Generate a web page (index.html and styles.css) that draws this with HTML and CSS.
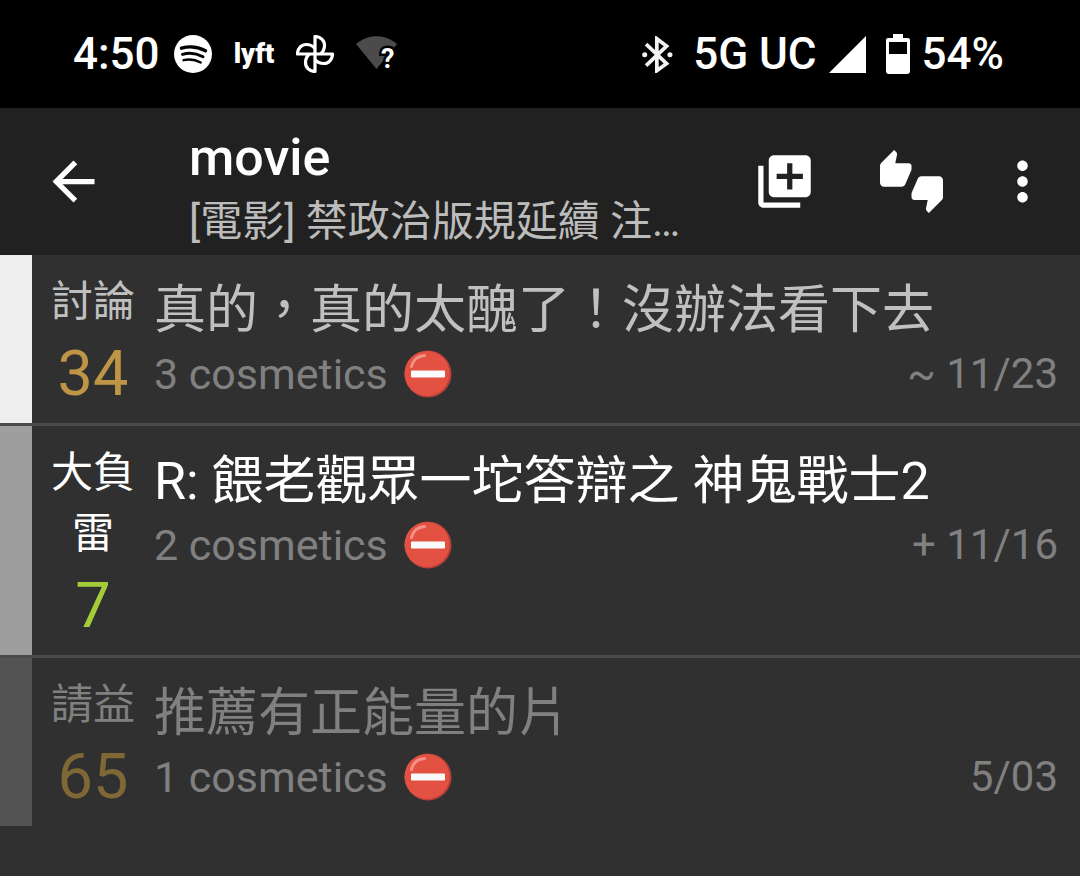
FILE: index.html
```html
<!DOCTYPE html>
<html lang="zh-Hant">
<head>
<meta charset="utf-8">
<meta name="viewport" content="width=device-width, initial-scale=1">
<title>movie</title>
<link rel="stylesheet" href="styles.css">
</head>
<body>
<svg class="defs" aria-hidden="true">
  <symbol id="no-entry" viewBox="0 0 48 48">
    <circle cx="24" cy="24" r="23.5" fill="#b93f3a"/>
    <circle cx="23" cy="23.5" r="22.5" fill="#e25141"/>
    <path d="M7.5 16.5C9 10 14 6 20.500 5.500" fill="none" stroke="#f29185" stroke-width="3" stroke-linecap="round"/>
    <rect x="7" y="20.500" width="34" height="7" rx="1" fill="#fafafa"/>
  </symbol>
</svg>

<div class="status-bar">
  <div class="status-group">
    <span class="clock">4:50</span>
    <svg class="spotify" viewBox="0 0 38 38" aria-hidden="true">
      <circle cx="19" cy="19" r="19" fill="#fff"/>
      <g fill="none" stroke="#000" stroke-linecap="round">
        <path d="M7.500 13.200C15 11 24 11.800 31.500 15.700" stroke-width="3.400"/>
        <path d="M8.500 19.400C15 17.500 22.500 18.300 29 21.800" stroke-width="2.900"/>
        <path d="M9.500 25.200C15.500 23.700 21 24.300 26.700 27.500" stroke-width="2.400"/>
      </g>
    </svg>
    <span class="lyft">lyft</span>
    <svg class="pinwheel" viewBox="-19 -19 38 38" aria-hidden="true">
      <g fill="none" stroke="#fff" stroke-width="3.200" stroke-linejoin="round">
        <path d="M0 0V-17.500C5.500-17.500 9.500-13.500 9.500-8.700C9.500-5 8-2 5.500 0"/>
        <path d="M0 0H17.500C17.500 5.500 13.500 9.500 8.700 9.500C5 9.500 2 8 0 5.500"/>
        <path d="M0 0V17.500C-5.500 17.500-9.500 13.500-9.500 8.700C-9.500 5-8 2-5.500 0"/>
        <path d="M0 0H-17.500C-17.500-5.500-13.500-9.500-8.700-9.500C-5-9.500-2-8 0-5.500"/>
      </g>
    </svg>
    <svg class="wifi" viewBox="0 0 41 36" aria-hidden="true">
      <path d="M0 8C12-2.500 29-2.500 41 8L20.500 33Z" fill="#4b4b4b"/>
      <text class="wifi-mark" x="25" y="32">?</text>
    </svg>
  </div>
  <div class="status-group">
    <svg class="bluetooth" viewBox="61 48 92 110" aria-hidden="true">
      <path d="M73 72L134 130L105 151V56L134 78L73 136" fill="none" stroke="#f2f2f2" stroke-width="11" stroke-linejoin="miter"/>
      <circle cx="69" cy="103.500" r="7.500" fill="#f2f2f2"/>
      <circle cx="144" cy="103.500" r="7.500" fill="#f2f2f2"/>
    </svg>
    <span class="network">5G UC</span>
    <svg class="signal" viewBox="0 0 37 37" aria-hidden="true"><path d="M37 0V37H0Z" fill="#fff"/></svg>
    <svg class="battery" viewBox="0 0 24 40" aria-hidden="true">
      <path fill="#fff" fill-rule="evenodd" d="M7 0H17V4H22Q24 4 24 6V37Q24 40 21 40H3Q0 40 0 37V6Q0 4 2 4H7ZM3 8V20H21V8Z"/>
    </svg>
    <span class="percent">54%</span>
  </div>
</div>

<header class="app-bar">
  <button class="icon-button" type="button" aria-label="返回">
    <svg class="icon" viewBox="0 0 24 24"><path d="M20 11H7.830l5.590-5.590L12 4l-8 8 8 8 1.410-1.410L7.830 13H20v-2z"/></svg>
  </button>
  <div class="heading">
    <h1 class="board">movie</h1>
    <p class="board-info">[電影] 禁政治版規延續 注…</p>
  </div>
  <div class="actions">
    <button class="icon-button" type="button" aria-label="新增">
      <svg class="icon" viewBox="0 0 24 24"><path d="M4 6H2v14c0 1.100.9 2 2 2h14v-2H4V6zm16-4H8c-1.100 0-2 .9-2 2v12c0 1.100.9 2 2 2h12c1.100 0 2-.9 2-2V4c0-1.100-.9-2-2-2zm-1 9h-4v4h-2v-4H9V9h4V5h2v4h4v2z"/></svg>
    </button>
    <button class="icon-button" type="button" aria-label="評價">
      <svg class="icon" viewBox="0 0 24 24"><path d="M12 6c0-.55-.45-1-1-1H5.820l.66-3.180.02-.23c0-.31-.13-.59-.33-.8L5.380 0 .44 4.940C.17 5.210 0 5.590 0 6v6.500c0 .83.67 1.500 1.500 1.500h6.750c.62 0 1.150-.38 1.380-.91l2.260-5.290c.07-.17.11-.36.11-.55V6zm10.500 4h-6.750c-.62 0-1.150.38-1.380.91l-2.260 5.290c-.07.17-.11.36-.11.55V18c0 .55.45 1 1 1h5.180l-.66 3.180-.02.24c0 .31.13.59.33.8l.79.78 4.940-4.940c.27-.27.44-.65.44-1.060v-6.500c0-.83-.67-1.500-1.500-1.500z"/></svg>
    </button>
    <button class="icon-button more" type="button" aria-label="更多">
      <svg class="icon" viewBox="0 0 24 24"><path d="M12 8c1.100 0 2-.9 2-2s-.9-2-2-2-2 .9-2 2 .9 2 2 2zm0 2c-1.100 0-2 .9-2 2s.9 2 2 2 2-.9 2-2-.9-2-2-2zm0 6c-1.100 0-2 .9-2 2s.9 2 2 2 2-.9 2-2-.9-2-2-2z"/></svg>
    </button>
  </div>
</header>

<main class="posts">
  <article class="post post-read">
    <div class="side"><span class="tag">討論</span><span class="score">34</span></div>
    <div class="body">
      <h2 class="title">真的，真的太醜了！沒辦法看下去</h2>
      <div class="meta">
        <span class="author">3 cosmetics <svg class="no-entry" role="img" aria-label="禁止"><use href="#no-entry"/></svg></span>
        <span class="date">~ 11/23</span>
      </div>
    </div>
  </article>
  <article class="post post-unread">
    <div class="side"><span class="tag">大負雷</span><span class="score">7</span></div>
    <div class="body">
      <h2 class="title">R: 餵老觀眾一坨答辯之 神鬼戰士2</h2>
      <div class="meta">
        <span class="author">2 cosmetics <svg class="no-entry" role="img" aria-label="禁止"><use href="#no-entry"/></svg></span>
        <span class="date">+ 11/16</span>
      </div>
    </div>
  </article>
  <article class="post post-faded">
    <div class="side"><span class="tag">請益</span><span class="score">65</span></div>
    <div class="body">
      <h2 class="title">推薦有正能量的片</h2>
      <div class="meta">
        <span class="author">1 cosmetics <svg class="no-entry" role="img" aria-label="禁止"><use href="#no-entry"/></svg></span>
        <span class="date">5/03</span>
      </div>
    </div>
  </article>
</main>
</body>
</html>
```

FILE: styles.css
```css
* {
  box-sizing: border-box;
}

body {
  margin: 0;
  background: #303030;
  color: #fff;
  font-family: Roboto, "Noto Sans CJK TC", sans-serif;
  font-size: 42px;
}

h1, h2, p {
  margin: 0;
  font-weight: 400;
}

.defs {
  display: none;
}

/* System status bar */
.status-bar {
  display: flex;
  justify-content: space-between;
  height: 108px;
  padding: 0 76px 0 73px;
  background: #000;
  font-size: 44px;
  font-weight: 500;
  line-height: 52px;
  white-space: nowrap;
}

.status-group {
  display: flex;
  align-items: center;
}

.spotify {
  width: 38px;
  height: 38px;
  margin-left: 14px;
}

.lyft {
  margin-left: 22px;
  font-size: 27px;
  font-weight: 900;
  line-height: 32px;
}

.pinwheel {
  width: 38px;
  height: 38px;
  margin-left: 22px;
}

.wifi {
  width: 41px;
  height: 36px;
  margin-left: 22px;
  overflow: visible;
}

.wifi-mark {
  fill: #fff;
  stroke: #000;
  stroke-width: 5px;
  paint-order: stroke;
  font-size: 27px;
  font-weight: 700;
}

.bluetooth {
  width: 31px;
  height: 37px;
}

.network {
  margin-left: 20px;
}

.signal {
  width: 37px;
  height: 37px;
  margin-left: 12px;
}

.battery {
  width: 24px;
  height: 40px;
  margin-left: 20px;
}

.percent {
  margin-left: 12px;
}

/* App bar */
.app-bar {
  display: flex;
  align-items: center;
  height: 147px;
  padding: 0 26px 0 42px;
  background: #212121;
}

.icon-button {
  flex: none;
  display: block;
  padding: 0;
  border: 0;
  background: none;
  color: inherit;
}

.icon {
  display: block;
  width: 63px;
  height: 63px;
  fill: currentColor;
}

.heading {
  flex: 1;
  min-width: 0;
  padding: 14px 0 0 84px;
}

.board {
  font-size: 52px;
  font-weight: 500;
  line-height: 66px;
}

.board-info {
  overflow: hidden;
  color: #bcbcbc;
  line-height: 62px;
  white-space: nowrap;
  text-overflow: ellipsis;
}

.actions {
  display: flex;
  gap: 64px;
}

.more {
  margin-left: -16px;
}

/* Post list */
.post {
  display: flex;
  border-left: 32px solid #9e9e9e;
}

.post + .post {
  position: relative;
  margin-top: 3px;
}

.post + .post::before {
  content: "";
  position: absolute;
  inset: -3px 0 auto -32px;
  height: 3px;
  background: #4a4a4a;
}

.side {
  flex: none;
  display: flex;
  flex-direction: column;
  width: 122px;
  padding: 16px 16px 7px;
  text-align: center;
}

.tag {
  line-height: 61px;
}

.score {
  font-size: 63px;
  line-height: 84px;
}

.body {
  flex: 1;
  min-width: 0;
  padding: 18px 22px 0 0;
}

.title {
  font-size: 52px;
  line-height: 76px;
}

.meta {
  display: flex;
  justify-content: space-between;
  color: #808080;
  line-height: 50px;
}

.author {
  display: flex;
  align-items: center;
  gap: 16px;
  font-size: 43px;
}

.no-entry {
  width: 48px;
  height: 48px;
}

.post-read {
  border-color: #eee;
  color: #c0c0c0;
}

.post-read .score {
  color: #bd9545;
}

.post-unread .score {
  color: #a4cc39;
}

.post-faded {
  border-color: #535353;
  color: #808080;
}

.post-faded .score {
  color: #7f6836;
}
```
